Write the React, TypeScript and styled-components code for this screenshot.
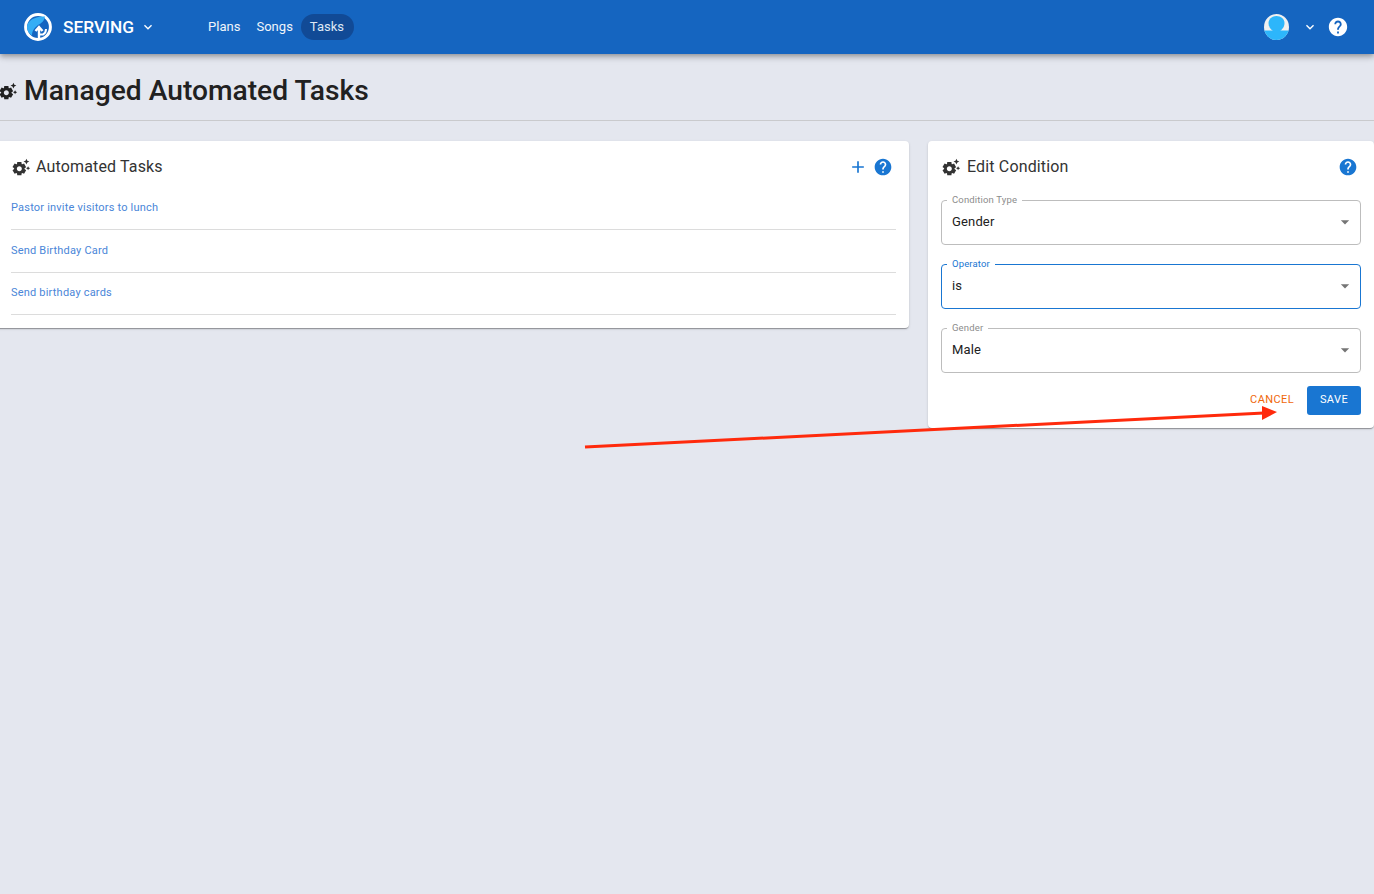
import React from "react";
import styled, { createGlobalStyle } from "styled-components";

const Global = createGlobalStyle`
  html, body { margin: 0; padding: 0; width: 100%; height: 100%; overflow: hidden; background: #e4e7ef; }
  body { font-family: Roboto, "Liberation Sans", sans-serif; color: #212121; }
  * { box-sizing: border-box; }
`;

const GEAR = "M17.41 6.59 15 5.5l2.41-1.09L18.5 2l1.09 2.41L22 5.5l-2.41 1.09L18.5 9l-1.09-2.41zm3.87 6.13L20.5 11l-.78 1.72-1.72.78 1.72.78.78 1.72.78-1.72L23 13.5l-1.72-.78zm-5.04 1.65 1.94 1.47-2.5 4.33-2.24-.94c-.2.13-.42.26-.64.37l-.3 2.4h-5l-.3-2.41c-.22-.11-.43-.23-.64-.37l-2.24.94-2.5-4.33 1.94-1.47c-.01-.11-.01-.24-.01-.37s0-.26.01-.38l-1.94-1.47 2.5-4.33 2.24.94c.2-.13.42-.26.64-.37L7.5 6h5l.3 2.41c.22.11.43.23.64.37l2.24-.94 2.5 4.33-1.94 1.47c.01.12.01.25.01.37s0 .26-.01.37zM13 14c0-1.66-1.34-3-3-3s-3 1.34-3 3 1.34 3 3 3 3-1.34 3-3z";
const HELP = "M12 2C6.48 2 2 6.48 2 12s4.48 10 10 10 10-4.48 10-10S17.52 2 12 2zm1 17h-2v-2h2v2zm2.07-7.75-.9.92C13.45 12.9 13 13.5 13 15h-2v-.5c0-1.1.45-2.1 1.17-2.83l1.24-1.26c.37-.36.59-.86.59-1.41 0-1.1-.9-2-2-2s-2 .9-2 2H8c0-2.21 1.79-4 4-4s4 1.79 4 4c0 .88-.36 1.68-.93 2.25z";
const CHEVRON = "M16.59 8.59 12 13.17 7.41 8.59 6 10l6 6 6-6z";
const PLUS = "M19 13h-6v6h-2v-6H5v-2h6V5h2v6h6v2z";
const DROP = "m7 10 5 5 5-5z";

const Svg = styled.svg<{ $size: number; $color: string }>`
  width: ${(p) => p.$size}px;
  height: ${(p) => p.$size}px;
  fill: ${(p) => p.$color};
  flex: none;
  display: block;
`;

const Icon = ({ d, size, color }: { d: string; size: number; color: string }) => (
  <Svg $size={size} $color={color} viewBox="0 0 24 24"><path d={d} /></Svg>
);

const Page = styled.div`
  position: relative;
  width: 1374px;
  height: 894px;
  overflow: hidden;
`;

const Bar = styled.header`
  height: 54px;
  background: #1565c0;
  box-shadow: 0 2px 4px -1px rgba(0,0,0,.2), 0 4px 5px rgba(0,0,0,.14), 0 1px 10px rgba(0,0,0,.12);
  display: flex;
  align-items: center;
  padding: 0 24px;
  color: #fff;
  position: relative;
`;

const Brand = styled.div`
  display: flex;
  align-items: center;
  width: 176px;
`;

const BrandName = styled.span`
  font-size: 17.3px;
  font-weight: 500;
  margin-left: 11px;
  margin-right: 6px;
  letter-spacing: 0;
`;

const Nav = styled.nav`
  display: flex;
  align-items: center;
`;

const NavItem = styled.span<{ $active?: boolean }>`
  font-size: 13px;
  line-height: 26px;
  height: 26px;
  letter-spacing: .02px;
  padding: 0 ${(p) => (p.$active ? 10 : 9)}px 0 ${(p) => (p.$active ? 9 : 8)}px;
  margin-right: ${(p) => (p.$active ? 0 : -1)}px;
  border-radius: 13px;
  background: ${(p) => (p.$active ? "#114a96" : "transparent")};
  color: ${(p) => (p.$active ? "#dfe8f5" : "#f0f5fb")};
`;

const BarRight = styled.div`
  margin-left: auto;
  display: flex;
  align-items: center;
  margin-right: 1px;
`;

const AvatarChevron = styled.span`
  margin: 0 9px 0 13px;
  display: flex;
`;

const Content = styled.main`
  margin-left: -17px;
  width: 1409px;
`;

const TitleRow = styled.div`
  display: flex;
  align-items: center;
  height: 67px;
  margin-left: 15px;
  border-bottom: 1px solid #c9cacd;
  padding-top: 7px;
  gap: 6px;
`;

const Title = styled.h1`
  margin: 0;
  font-size: 28.2px;
  font-weight: 500;
  letter-spacing: 0;
  color: #212121;
`;

const Columns = styled.div`
  display: grid;
  grid-template-columns: 926px 446px;
  column-gap: 19px;
  align-items: start;
  margin-top: 20px;
`;

const Card = styled.section`
  background: #fff;
  border-radius: 4px;
  box-shadow: 0 2px 1px -1px rgba(0,0,0,.2), 0 1px 1px rgba(0,0,0,.14), 0 1px 3px rgba(0,0,0,.12);
  padding: 13px;
`;

const TaskCard = styled(Card)`
  padding-left: 28px;
  height: 187px;
`;

const CardHead = styled.div`
  display: flex;
  align-items: center;
  height: 25px;
`;

const CardTitle = styled.h2`
  margin: 0 0 0 6px;
  font-size: 16px;
  font-weight: 400;
  letter-spacing: .15px;
  color: #333;
  flex: 1;
`;

const TaskTitle = styled(CardTitle)`
  margin-left: 5px;
`;

const HeadIcons = styled.div`
  display: flex;
  align-items: center;
  gap: 5px;
  margin-right: 3px;
`;

const List = styled.div`
  margin-top: 8px;
`;

const Row = styled.div<{ $h: number }>`
  height: ${(p) => p.$h}px;
  border-bottom: 1px solid #dcdcdc;
  display: flex;
  align-items: center;
  font-size: 11px;
  letter-spacing: .2px;
  color: #4a86d8;
  padding-bottom: ${(p) => (p.$h === 43 ? 1 : 3)}px;
`;

const Fieldset = styled.div<{ $focus?: boolean }>`
  position: relative;
  height: 45px;
  margin-top: 19px;
  border: 1px solid ${(p) => (p.$focus ? "#1976d2" : "#bdbdbd")};
  border-radius: 4px;
  display: flex;
  align-items: center;
  justify-content: space-between;
  padding: 0 5px 2px 10px;
  font-size: 13px;
  letter-spacing: .15px;
  color: #212121;
`;

const Legend = styled.span<{ $focus?: boolean }>`
  position: absolute;
  top: -7px;
  left: 5px;
  padding: 0 5px;
  background: #fff;
  font-size: 9.5px;
  line-height: 12px;
  letter-spacing: .15px;
  color: ${(p) => (p.$focus ? "#1976d2" : "#8c8c8c")};
`;

const Fields = styled.div`
  padding-top: 2px;
`;

const Actions = styled.div`
  display: flex;
  justify-content: flex-end;
  align-items: center;
  gap: 13px;
  margin-top: 13px;
`;

const Cancel = styled.span`
  font-size: 11px;
  letter-spacing: .4px;
  color: #f0670a;
  padding-bottom: 2px;
`;

const Save = styled.span`
  width: 54px;
  height: 29px;
  padding-bottom: 2px;
  background: #1976d2;
  border-radius: 3px;
  color: #fff;
  font-size: 11px;
  letter-spacing: .4px;
  display: flex;
  align-items: center;
  justify-content: center;
`;

const Overlay = styled.svg`
  position: absolute;
  inset: 0;
  width: 1374px;
  height: 894px;
  pointer-events: none;
`;

const Logo = () => (
  <svg width="28" height="28" viewBox="0 0 28 28">
    <circle cx="14" cy="14" r="12.4" fill="none" stroke="#fff" strokeWidth="3" />
    <path d="M21 3.5 C12 3 3 7 3 14.5 C3 17.5 5 20.5 8 22.5 C8 17 11 14.5 14 12 C18 10 20 8 21 3.5Z" fill="#35aef5" />
    <path d="M15 26 V14.5 M11.5 18 L15 14 L18.5 18" fill="none" stroke="#fff" strokeWidth="2.4" />
    <path d="M15 21.5 H19 C21 20.5 22 18.5 22 16" fill="none" stroke="#fff" strokeWidth="2" />
  </svg>
);

const Avatar = () => (
  <svg width="25" height="26" viewBox="0 0 25 26">
    <defs><clipPath id="av"><ellipse cx="12.5" cy="13" rx="12.5" ry="13" /></clipPath></defs>
    <g clipPath="url(#av)">
      <rect width="25" height="26" fill="#f0f0f0" />
      <path d="M12.5 2 C17 2 20.5 5 20.5 9 C20.5 13 18 15.5 16 17 H9 C7 15.5 4.5 13 4.5 9 C4.5 5 8 2 12.5 2Z" fill="#2db6fb" />
      <rect x="0" y="16.5" width="25" height="10" fill="#2db6fb" />
    </g>
  </svg>
);

const Field = ({ label, value, focus }: { label: string; value: string; focus?: boolean }) => (
  <Fieldset $focus={focus}>
    <Legend $focus={focus}>{label}</Legend>
    {value}
    <Icon d={DROP} size={20} color="#757575" />
  </Fieldset>
);

export default function App() {
  return (
    <Page>
      <Global />
      <Bar>
        <Brand>
          <Logo />
          <BrandName>SERVING</BrandName>
          <Icon d={CHEVRON} size={16} color="#fff" />
        </Brand>
        <Nav>
          <NavItem>Plans</NavItem>
          <NavItem>Songs</NavItem>
          <NavItem $active>Tasks</NavItem>
        </Nav>
        <BarRight>
          <Avatar />
          <AvatarChevron><Icon d={CHEVRON} size={16} color="#fff" /></AvatarChevron>
          <Icon d={HELP} size={22} color="#fff" />
        </BarRight>
      </Bar>
      <Content>
        <TitleRow>
          <Icon d={GEAR} size={20} color="#212121" />
          <Title>Managed Automated Tasks</Title>
        </TitleRow>
        <Columns>
          <TaskCard>
            <CardHead>
              <Icon d={GEAR} size={20} color="#333" />
              <TaskTitle>Automated Tasks</TaskTitle>
              <HeadIcons>
                <Icon d={PLUS} size={20} color="#1976d2" />
                <Icon d={HELP} size={20} color="#1976d2" />
              </HeadIcons>
            </CardHead>
            <List>
              <Row $h={43}>Pastor invite visitors to lunch</Row>
              <Row $h={43}>Send Birthday Card</Row>
              <Row $h={42}>Send birthday cards</Row>
            </List>
          </TaskCard>
          <Card>
            <CardHead>
              <Icon d={GEAR} size={20} color="#333" />
              <CardTitle>Edit Condition</CardTitle>
              <HeadIcons>
                <Icon d={HELP} size={20} color="#1976d2" />
              </HeadIcons>
            </CardHead>
            <Fields>
              <Field label="Condition Type" value="Gender" />
              <Field label="Operator" value="is" focus />
              <Field label="Gender" value="Male" />
            </Fields>
            <Actions>
              <Cancel>CANCEL</Cancel>
              <Save>SAVE</Save>
            </Actions>
          </Card>
        </Columns>
      </Content>
      <Overlay viewBox="0 0 1374 894">
        <line x1="585" y1="447" x2="1264" y2="413" stroke="#ff2a0c" strokeWidth="3" />
        <polygon points="1262,406 1277,412 1262,420" fill="#ff2a0c" />
      </Overlay>
    </Page>
  );
}
